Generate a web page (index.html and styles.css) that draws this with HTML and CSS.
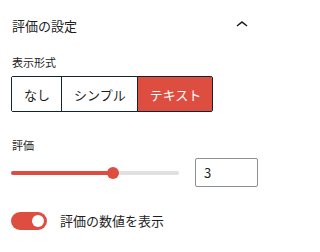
FILE: index.html
```html
<!DOCTYPE html>
<html lang="ja">
<head>
<meta charset="utf-8">
<link rel="stylesheet" href="styles.css">
</head>
<body>
<div class="panel">
  <div class="panel-title">
    <span>評価の設定</span>
    <svg class="chev" width="24" height="24" viewBox="0 0 24 24"><path d="M6.5 12.4L12 8l5.5 4.4-.9 1.2L12 10l-4.6 3.6z" fill="#1e1e1e"/></svg>
  </div>
  <div class="field">
    <div class="label">表示形式</div>
    <div class="group">
      <div class="btn">なし</div>
      <div class="btn">シンプル</div>
      <div class="btn on">テキスト</div>
    </div>
  </div>
  <div class="field">
    <div class="label">評価</div>
    <div class="range-row">
      <div class="track">
        <div class="fill"></div>
        <div class="thumb"></div>
      </div>
      <div class="num">3</div>
    </div>
  </div>
  <div class="toggle-row">
    <div class="toggle"><div class="knob"></div></div>
    <span>評価の数値を表示</span>
  </div>
</div>
</body>
</html>
```
FILE: styles.css
```css
html, body { margin: 0; padding: 0; background: #fff; }
body {
  font-family: "Noto Sans CJK JP", "Noto Sans", sans-serif;
  color: #1e1e1e;
  width: 270px;
  height: 252px;
  overflow: hidden;
}
.panel { padding: 0 12px 0 11px; }
.panel-title {
  display: flex;
  align-items: center;
  justify-content: space-between;
  height: 18px;
  padding-top: 16px;
  font-size: 13px;
  padding-left: 1px;
}
.chev { margin-right: 4px; }
.field { margin-top: 20px; }
.label {
  font-size: 11px;
  line-height: 16px;
  padding-left: 1px;
}
.group {
  display: inline-flex;
  margin-top: 6px;
  border: 1px solid #12252e;
  border-radius: 2px;
  height: 34px;
}
.btn {
  display: flex;
  align-items: center;
  padding: 0 11px 0 12px;
  font-size: 13px;
  background: #fff;
}
.btn + .btn { border-left: 1px solid #12252e; }
.btn.on { background: #dd4e41; color: #fff; }
.field + .field { margin-top: 25px; }
.range-row {
  display: flex;
  align-items: center;
  margin-top: 5px;
}
.track {
  position: relative;
  width: 168px;
  height: 4px;
  border-radius: 2px;
  background: #e0e0e0;
}
.fill {
  width: 102px;
  height: 4px;
  border-radius: 2px;
  background: #dd4e41;
}
.thumb {
  position: absolute;
  left: 96px;
  top: -4px;
  width: 12px;
  height: 12px;
  border-radius: 50%;
  background: #dd4e41;
}
.num {
  margin-left: 16px;
  width: 53px;
  height: 27px;
  border: 1px solid #8c8f94;
  border-radius: 2px;
  padding-left: 8px;
  display: flex;
  align-items: center;
  font-size: 13px;
}
.toggle-row {
  display: flex;
  align-items: center;
  margin-top: 24px;
  font-size: 13px;
}
.toggle {
  width: 36px;
  height: 18px;
  border-radius: 9px;
  background: #dd4e41;
  display: flex;
  align-items: center;
  justify-content: flex-end;
  box-sizing: border-box;
  padding-right: 3px;
  margin-right: 13px;
}
.knob {
  width: 12px;
  height: 12px;
  border-radius: 50%;
  background: #fff;
}
```
